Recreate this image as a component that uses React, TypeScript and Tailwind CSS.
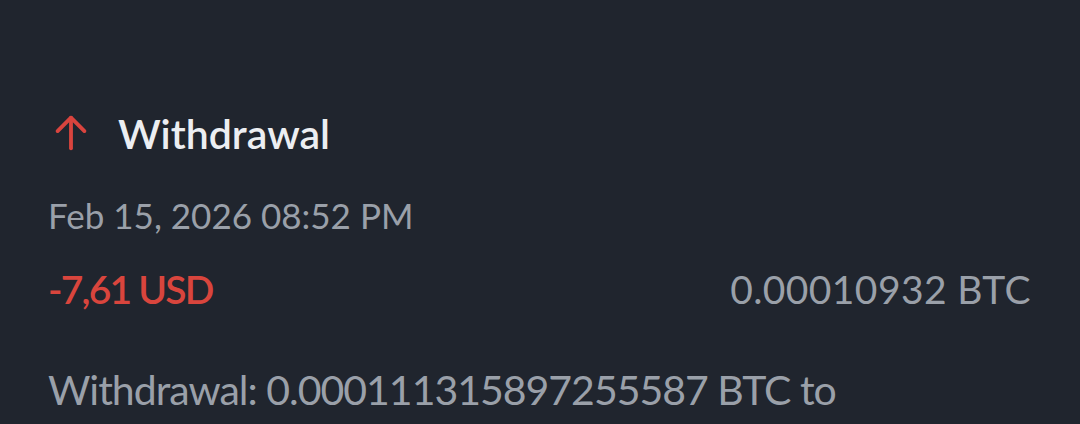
export default function App() {
  return (
    <div className="w-[1080px] h-[424px] overflow-hidden bg-[#20252e]" style={{ fontFamily: 'Lato, "Noto Sans", sans-serif' }}>
      <div className="pl-[48px] pr-[49px] pt-[108px] flex flex-col">
        <div className="flex items-center h-[50px]">
          <svg width="46" height="46" viewBox="0 0 24 24" fill="none" stroke="#d9443e" strokeWidth="2" strokeLinecap="round" strokeLinejoin="round">
            <path d="M12 20V4" />
            <path d="M5 11l7-7 7 7" />
          </svg>
          <span className="ml-[24px] text-[41px] font-semibold text-[#eceef2] leading-none">Withdrawal</span>
        </div>
        <div className="mt-[40px] text-[35px] text-[#9aa0a9] leading-none whitespace-nowrap">Feb 15, 2026 08:52 PM</div>
        <div className="mt-[37px] flex justify-between items-center leading-none">
          <span className="text-[39px] font-semibold tracking-[-1.8px] text-[#d9453d]">-7,61 USD</span>
          <span className="text-[39px] tracking-[0.4px] text-[#9aa0a9]">0.00010932 BTC</span>
        </div>
        <div className="mt-[60px] text-[41px] tracking-[-1px] text-[#9aa0a9] leading-none whitespace-nowrap">Withdrawal: 0.000111315897255587 BTC to</div>
      </div>
    </div>
  );
}
